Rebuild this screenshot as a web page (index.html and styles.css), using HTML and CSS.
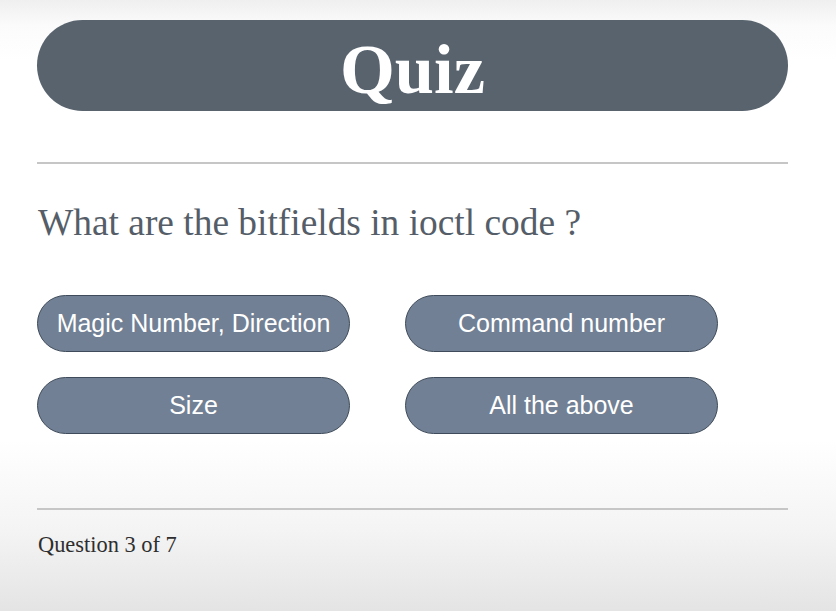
FILE: index.html
```html
<!DOCTYPE html>
<html lang="en">
<head>
<meta charset="utf-8">
<title>Quiz</title>
<link rel="stylesheet" href="styles.css">
</head>
<body>
<main class="page">
  <header class="title-bar"><h1 class="title">Quiz</h1></header>
  <hr class="rule">
  <h2 class="question">What are the bitfields in ioctl code ?</h2>
  <div class="answers">
    <button class="answer">Magic Number, Direction</button>
    <button class="answer">Command number</button>
    <button class="answer">Size</button>
    <button class="answer">All the above</button>
  </div>
  <hr class="rule rule-bottom">
  <p class="progress">Question 3 of 7</p>
</main>
</body>
</html>
```

FILE: styles.css
```css
html, body {
  margin: 0;
  padding: 0;
  height: 100%;
}
body {
  background: linear-gradient(to bottom, #efefef 0px, #fbfbfb 25px, #ffffff 60px, #ffffff 440px, #f4f4f4 530px, #e4e4e4 611px);
  font-family: "Liberation Serif", "Times New Roman", serif;
  overflow: hidden;
}
.page {
  width: 751px;
  padding: 20px 0 0 37px;
  display: flex;
  flex-direction: column;
}
.title-bar {
  box-sizing: border-box;
  height: 91px;
  padding-top: 7px;
  border-radius: 46px;
  background: #58636e;
  text-align: center;
}
.title {
  margin: 0;
  color: #ffffff;
  font-family: "Liberation Serif", "Times New Roman", serif;
  font-weight: bold;
  font-size: 70.5px;
  line-height: 84px;
}
.rule {
  margin: 51px 0 0 0;
  border: 0;
  height: 2px;
  background: #c6c6c6;
}
.question {
  margin: 37px 0 0 1px;
  font-weight: normal;
  font-size: 37.4px;
  line-height: 44px;
  color: #555e68;
}
.answers {
  margin-top: 50px;
  display: grid;
  grid-template-columns: 313px 313px;
  column-gap: 55px;
  row-gap: 25px;
}
.answer {
  height: 57px;
  border-radius: 29px;
  border: 1px solid #3f4b5a;
  background: #718094;
  color: #ffffff;
  font-family: "Liberation Sans", Arial, sans-serif;
  font-size: 25px;
  padding: 0;
}
.rule-bottom {
  margin-top: 74px;
}
.progress {
  margin: 22px 0 0 1px;
  font-size: 22.4px;
  line-height: 26px;
  color: #2e2e2e;
}
```
